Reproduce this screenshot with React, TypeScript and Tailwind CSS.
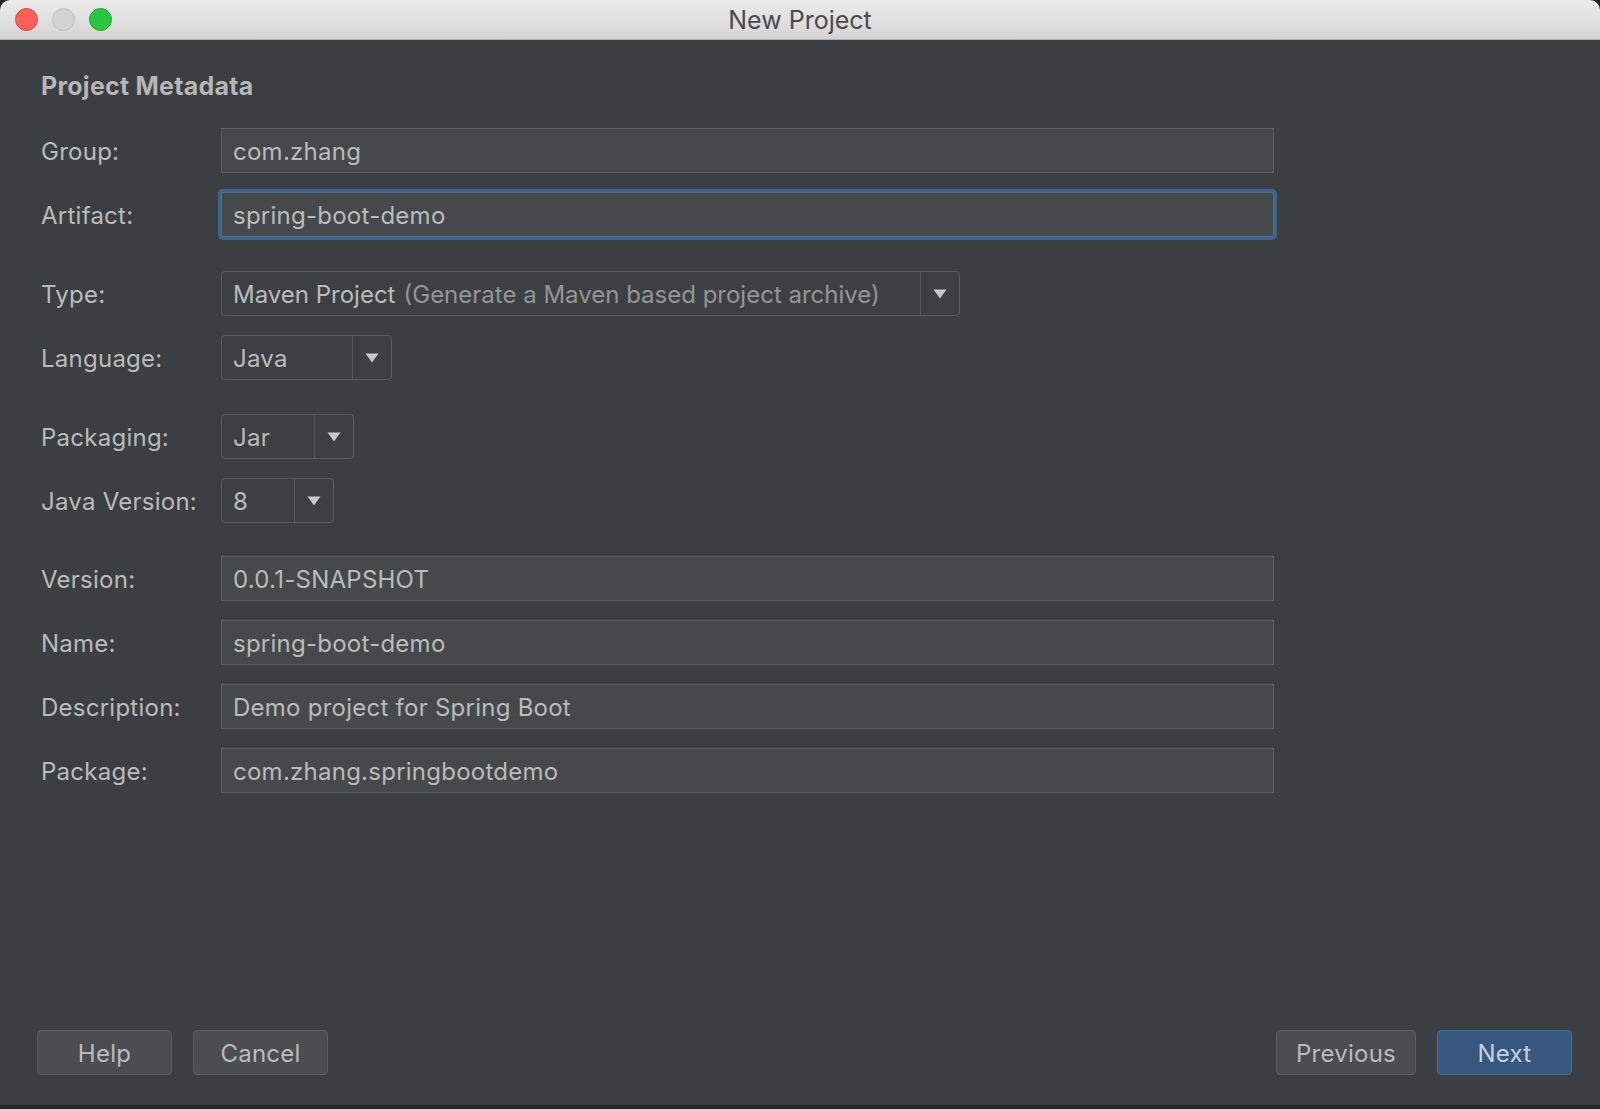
import React from 'react';

interface RowProps {
  label: string;
  className?: string;
  children: React.ReactNode;
}

const Row: React.FC<RowProps> = ({ label, className = '', children }) => (
  <div className={`flex items-center h-[45px] ${className}`}>
    <span className="w-[180px] shrink-0 leading-[28px] pt-[2px] text-[#bbbbbb]">{label}</span>
    {children}
  </div>
);

const TextField: React.FC<{ value: string; focused?: boolean }> = ({ value, focused }) =>
  focused ? (
    <div className="h-[45px] w-[1053px] flex items-center pl-[11px] pt-[2px] bg-[#45494a] border border-[#4c6f96] rounded-[2px] shadow-[0_0_0_3px_#3b6590] text-[#bbbbbb]">
      {value}
    </div>
  ) : (
    <div className="h-[45px] w-[1053px] flex items-center pl-[11px] pt-[2px] bg-[#45494a] border border-[#5e6162] text-[#bbbbbb]">
      {value}
    </div>
  );

const ArrowDown = () => (
  <svg width="14" height="10" viewBox="0 0 14 10">
    <path d="M0.5 0.5 L13.5 0.5 L7 9.5 Z" fill="#c9c9c9" />
  </svg>
);

interface ComboProps {
  width: string;
  children: React.ReactNode;
}

const Combo: React.FC<ComboProps> = ({ width, children }) => (
  <div className={`h-[45px] ${width} flex bg-[#3d4042] border border-[#5b5e60] rounded-[4px]`}>
    <div className="flex-1 flex items-center pl-[11px] pt-[2px] whitespace-nowrap overflow-hidden">{children}</div>
    <div className="w-[39px] shrink-0 flex items-center justify-center border-l border-[#55585a]">
      <ArrowDown />
    </div>
  </div>
);

const Button: React.FC<{ children: React.ReactNode; width: string; primary?: boolean }> = ({ children, width, primary }) => (
  <button
    className={`h-[45px] ${width} rounded-[4px] border flex items-center justify-center pt-[2px] ${
      primary ? 'bg-[#365880] border-[#4a6d8f] text-[#c5d0dc]' : 'bg-[#4b4e50] border-[#5b5e60] text-[#bbbbbb]'
    }`}
  >
    {children}
  </button>
);

export default function App() {
  return (
    <div className="w-[1600px] h-[1109px] bg-[#222324] overflow-hidden font-['Inter','Noto_Sans',sans-serif] text-[24px] tracking-[0.25px] antialiased">
      <div className="h-[1105px] flex flex-col rounded-t-[10px] overflow-hidden">
        {/* title bar */}
        <div className="h-[40px] shrink-0 grid grid-cols-[1fr_auto_1fr] items-center bg-gradient-to-b from-[#ececec] to-[#d4d4d4] border-b border-[#b0b0b0]">
          <div className="flex items-center gap-[14px] pl-[15px]">
            <span className="w-[23px] h-[23px] rounded-full bg-[#fd5f57] border border-[#e0453f]" />
            <span className="w-[23px] h-[23px] rounded-full bg-[#d3d3d3] border border-[#bebebe]" />
            <span className="w-[23px] h-[23px] rounded-full bg-[#2ac640] border border-[#1fab2d]" />
          </div>
          <span className="text-[25px] leading-[30px] tracking-normal text-[#4b4b4b]">New Project</span>
          <div />
        </div>

        {/* body */}
        <div className="flex-1 flex flex-col bg-[#3c3f41] pt-[32px]">
          <div className="pl-[41px]">
            <h1 className="h-[28px] leading-[28px] text-[25px] tracking-[0.25px] font-bold text-[#b6b6b6]">Project Metadata</h1>

            <Row label="Group:" className="mt-[28px]">
              <TextField value="com.zhang" />
            </Row>
            <Row label="Artifact:" className="mt-[19px]">
              <TextField value="spring-boot-demo" focused />
            </Row>

            <Row label="Type:" className="mt-[34px]">
              <Combo width="w-[739px]">
                <span className="tracking-normal text-[#bbbbbb]">Maven Project</span>
                <span className="ml-[8px] tracking-normal text-[#959595]">(Generate a Maven based project archive)</span>
              </Combo>
            </Row>
            <Row label="Language:" className="mt-[19px]">
              <Combo width="w-[171px]">
                <span className="text-[#bbbbbb]">Java</span>
              </Combo>
            </Row>

            <Row label="Packaging:" className="mt-[34px]">
              <Combo width="w-[133px]">
                <span className="text-[#bbbbbb]">Jar</span>
              </Combo>
            </Row>
            <Row label="Java Version:" className="mt-[19px]">
              <Combo width="w-[113px]">
                <span className="text-[#bbbbbb]">8</span>
              </Combo>
            </Row>

            <Row label="Version:" className="mt-[33px]">
              <TextField value="0.0.1-SNAPSHOT" />
            </Row>
            <Row label="Name:" className="mt-[19px]">
              <TextField value="spring-boot-demo" />
            </Row>
            <Row label="Description:" className="mt-[19px]">
              <TextField value="Demo project for Spring Boot" />
            </Row>
            <Row label="Package:" className="mt-[19px]">
              <TextField value="com.zhang.springbootdemo" />
            </Row>
          </div>

          <div className="mt-auto mb-[30px] flex justify-between pl-[37px] pr-[28px]">
            <div className="flex gap-[21px]">
              <Button width="w-[135px]">Help</Button>
              <Button width="w-[135px]">Cancel</Button>
            </div>
            <div className="flex gap-[21px]">
              <Button width="w-[140px]">Previous</Button>
              <Button width="w-[135px]" primary>Next</Button>
            </div>
          </div>
        </div>
      </div>
    </div>
  );
}
